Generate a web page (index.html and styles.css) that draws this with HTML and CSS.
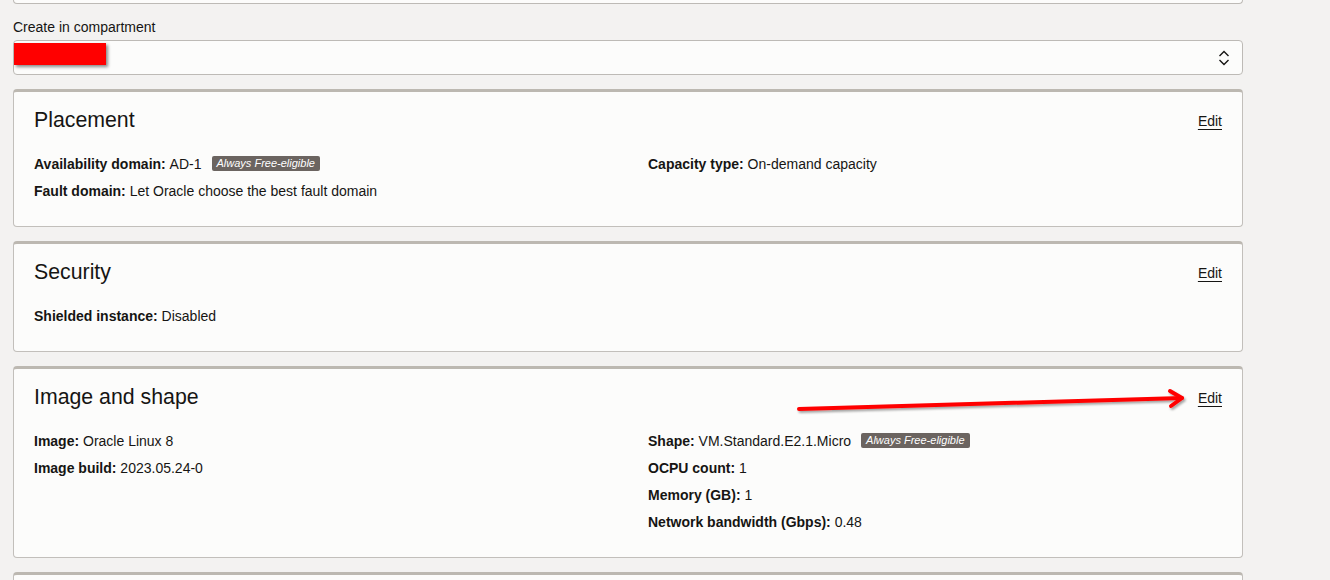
FILE: index.html
```html
<!DOCTYPE html>
<html>
<head>
<meta charset="utf-8">
<link rel="stylesheet" href="styles.css">
</head>
<body>
<div class="page">
  <div class="stub"></div>
  <div class="field-label">Create in compartment</div>
  <div class="select">
    <div class="redact"></div>
    <svg class="chev" width="12" height="16" viewBox="0 0 12 16"><path d="M1.5 6 L6 1.5 L10.5 6 M1.5 10 L6 14.5 L10.5 10" fill="none" stroke="#161513" stroke-width="1.4"/></svg>
  </div>

  <section class="card">
    <div class="card-head"><h2>Placement</h2><a class="edit" href="#">Edit</a></div>
    <div class="cols">
      <div class="col">
        <div class="row"><b>Availability domain:</b>&nbsp;AD-1<span class="badge">Always Free-eligible</span></div>
        <div class="row"><b>Fault domain:</b>&nbsp;Let Oracle choose the best fault domain</div>
      </div>
      <div class="col">
        <div class="row"><b>Capacity type:</b>&nbsp;On-demand capacity</div>
      </div>
    </div>
  </section>

  <section class="card">
    <div class="card-head"><h2>Security</h2><a class="edit" href="#">Edit</a></div>
    <div class="cols">
      <div class="col">
        <div class="row"><b>Shielded instance:</b>&nbsp;Disabled</div>
      </div>
    </div>
  </section>

  <section class="card">
    <div class="card-head"><h2>Image and shape</h2><a class="edit" href="#">Edit</a></div>
    <div class="cols">
      <div class="col">
        <div class="row"><b>Image:</b>&nbsp;Oracle Linux 8</div>
        <div class="row"><b>Image build:</b>&nbsp;2023.05.24-0</div>
      </div>
      <div class="col">
        <div class="row"><b>Shape:</b>&nbsp;VM.Standard.E2.1.Micro<span class="badge">Always Free-eligible</span></div>
        <div class="row"><b>OCPU count:</b>&nbsp;1</div>
        <div class="row"><b>Memory (GB):</b>&nbsp;1</div>
        <div class="row"><b>Network bandwidth (Gbps):</b>&nbsp;0.48</div>
      </div>
    </div>
  </section>

  <section class="card card-next"></section>

  <svg class="arrow" width="420" height="40" viewBox="0 0 420 40">
    <defs>
      <filter id="sh" x="-10%" y="-50%" width="120%" height="200%">
        <feDropShadow dx="1.5" dy="2" stdDeviation="1.2" flood-color="#000" flood-opacity="0.35"/>
      </filter>
    </defs>
    <g filter="url(#sh)" fill="none" stroke="#ff0000" stroke-width="4" stroke-linecap="round" stroke-linejoin="round">
      <path d="M11 29 L394 18"/>
      <path d="M382 11 L394 18 L383 26"/>
    </g>
  </svg>
</div>
</body>
</html>
```

FILE: styles.css
```css
html, body {
  margin: 0;
  padding: 0;
  background: #f3f2f1;
}
body {
  font-family: "Liberation Sans", Arial, sans-serif;
  font-size: 14px;
  color: #161513;
}
.page {
  position: relative;
  margin-left: 13px;
  width: 1230px;
}
.stub {
  height: 3px;
  background: #fcfcfb;
  border: 1px solid #bdbab6;
  border-top: none;
  border-radius: 0 0 4px 4px;
}
.field-label {
  margin-top: 13px;
  line-height: 20px;
  font-size: 14px;
}
.select {
  margin-top: 3px;
  height: 35px;
  box-sizing: border-box;
  border: 1px solid #bdbab6;
  border-radius: 4px;
  background: #fcfcfb;
  display: flex;
  align-items: flex-start;
  padding: 2px 12px 0 0;
}
.redact {
  width: 92px;
  height: 22px;
  background: #ff0000;
  box-shadow: 2px 2px 3px rgba(0,0,0,0.45);
}
.chev {
  margin-left: auto;
  align-self: center;
  margin-top: -2px;
}
.card {
  margin-top: 14px;
  background: #fcfcfb;
  border: 1px solid #c2bfbb;
  border-top: 3px solid #bcb8b1;
  border-radius: 4px;
  padding: 13px 20px 22px 20px;
}
.card-head {
  display: flex;
  align-items: center;
  justify-content: space-between;
  height: 28px;
}
.card-head h2 {
  margin: 0;
  padding-top: 2px;
  font-size: 21.3px;
  font-weight: normal;
  line-height: 28px;
}
.edit {
  color: #161513;
  font-size: 14px;
  text-decoration: underline;
  text-underline-offset: 3px;
  margin-top: 4px;
}
.cols {
  margin-top: 17px;
  display: grid;
  grid-template-columns: 614px 1fr;
}
.col {
  display: flex;
  flex-direction: column;
}
.row {
  height: 27px;
  display: flex;
  align-items: center;
  white-space: nowrap;
}
.row b {
  font-weight: bold;
}
.badge {
  margin-left: 10px;
  background: #6b6460;
  color: #ffffff;
  font-style: italic;
  font-size: 11px;
  line-height: 15px;
  padding: 0 5px;
  border-radius: 2px;
}
.card-next {
  height: 40px;
  padding: 0;
}
.arrow {
  position: absolute;
  left: 775px;
  top: 380px;
}
```
